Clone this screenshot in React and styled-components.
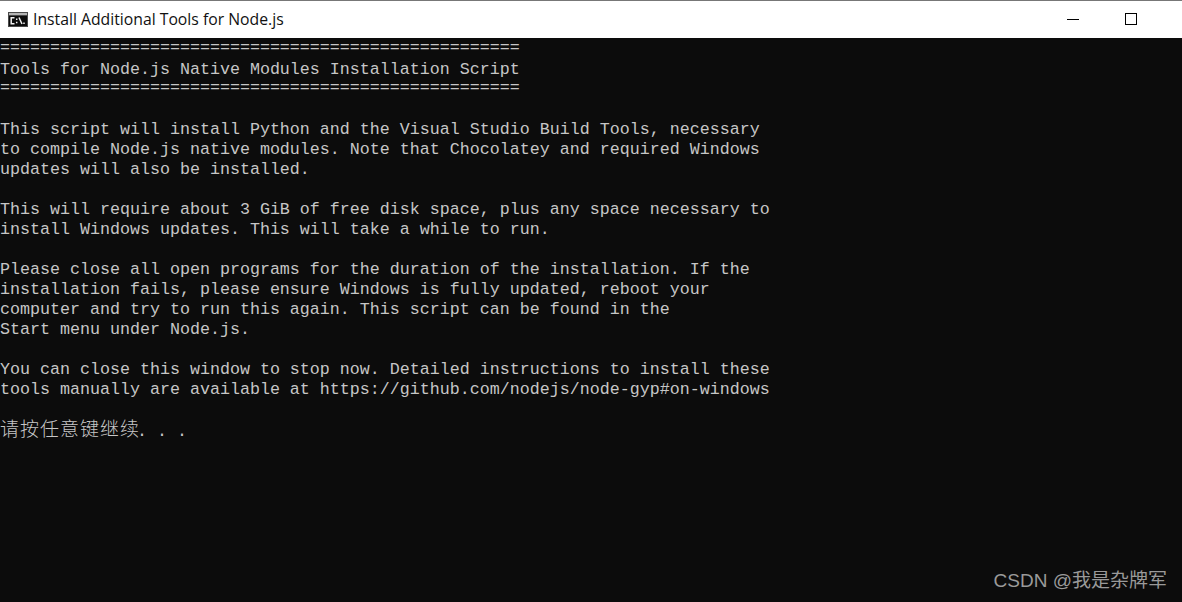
import React from 'react';
import styled, {createGlobalStyle} from 'styled-components';

const GlobalStyle = createGlobalStyle`
  html, body {
    margin: 0;
    padding: 0;
    background: #0c0c0c;
  }
`;

const Window = styled.div`
  position: relative;
  width: 1182px;
  height: 602px;
  display: flex;
  flex-direction: column;
  overflow: hidden;
`;

const TopEdge = styled.div`
  height: 1px;
  background: #777;
`;

const TitleBar = styled.header`
  height: 37px;
  background: #fff;
  display: flex;
  align-items: center;
  padding-left: 8px;
`;

const TitleIcon = styled.svg`
  width: 20px;
  height: 15px;
  margin: 0 5px 1px 0;
  flex: none;
`;

const Title = styled.span`
  font-family: "Open Sans", "Liberation Sans", sans-serif;
  font-size: 15.75px;
  line-height: 20px;
  margin-bottom: 2px;
  color: #111;
  white-space: nowrap;
  flex: 1;
`;

const Controls = styled.div`
  display: flex;
  align-items: center;
  height: 100%;
  padding: 0 22px 1px 0;
  box-sizing: border-box;
`;

const ControlButton = styled.div`
  width: 58px;
  height: 100%;
  display: flex;
  align-items: center;
  justify-content: center;
`;

const MinimizeGlyph = styled.span`
  width: 12px;
  height: 1px;
  background: #000;
`;

const MaximizeGlyph = styled.span`
  width: 12px;
  height: 12px;
  box-sizing: border-box;
  border: 1px solid #000;
`;

const Console = styled.main`
  flex: 1;
  background: #0c0c0c;
  color: #c6c6c6;
  font-family: "Liberation Mono", "Noto Sans CJK SC", monospace;
  font-size: 16.66px;
`;

const Line = styled.div`
  height: 20px;
  line-height: ${p => (p.$raised ? '20px' : '24px')};
  white-space: pre;
`;

const Cjk = styled.span`
  font-family: "Noto Sans CJK SC", sans-serif;
  font-size: 19px;
  letter-spacing: 1px;
  margin-right: -3px;
  font-weight: 300;
`;

const Watermark = styled.div`
  position: absolute;
  right: 15px;
  bottom: 9px;
  font-family: "Liberation Sans", "Noto Sans CJK SC", sans-serif;
  font-size: 19px;
  line-height: 24px;
  color: #9a9a9a;
`;

const rule = '='.repeat(52);

const lines = [
  rule,
  'Tools for Node.js Native Modules Installation Script',
  rule,
  '',
  'This script will install Python and the Visual Studio Build Tools, necessary',
  'to compile Node.js native modules. Note that Chocolatey and required Windows',
  'updates will also be installed.',
  '',
  'This will require about 3 GiB of free disk space, plus any space necessary to',
  'install Windows updates. This will take a while to run.',
  '',
  'Please close all open programs for the duration of the installation. If the',
  'installation fails, please ensure Windows is fully updated, reboot your',
  'computer and try to run this again. This script can be found in the',
  'Start menu under Node.js.',
  '',
  'You can close this window to stop now. Detailed instructions to install these',
  'tools manually are available at https://github.com/nodejs/node-gyp#on-windows',
  '',
];

export default function App() {
  return (
    <Window>
      <GlobalStyle />
      <TopEdge />
      <TitleBar>
        <TitleIcon viewBox="0 0 20 15">
          <rect width="20" height="15" fill="#4a4a4a" />
          <rect x="1" y="1" width="18" height="2" fill="#b4b4b4" />
          <rect x="1" y="4" width="18" height="10" fill="#0c0c0c" />
          <path d="M6.5 5.7H3.2v6h3.3M8.7 6.5v1.4M8.7 9.8v1.4M11 5.5l3 6.5M16 10.5v1.5" stroke="#f2f2f2" strokeWidth="1.5" fill="none" />
        </TitleIcon>
        <Title>Install Additional Tools for Node.js</Title>
        <Controls>
          <ControlButton><MinimizeGlyph /></ControlButton>
          <ControlButton><MaximizeGlyph /></ControlButton>
        </Controls>
      </TitleBar>
      <Console>
        {lines.map((text, i) => (
          <Line key={i} $raised={text === rule}>{text}</Line>
        ))}
        <Line $raised><Cjk>请按任意键继续</Cjk>. . .</Line>
      </Console>
      <Watermark>CSDN @我是杂牌军</Watermark>
    </Window>
  );
}
